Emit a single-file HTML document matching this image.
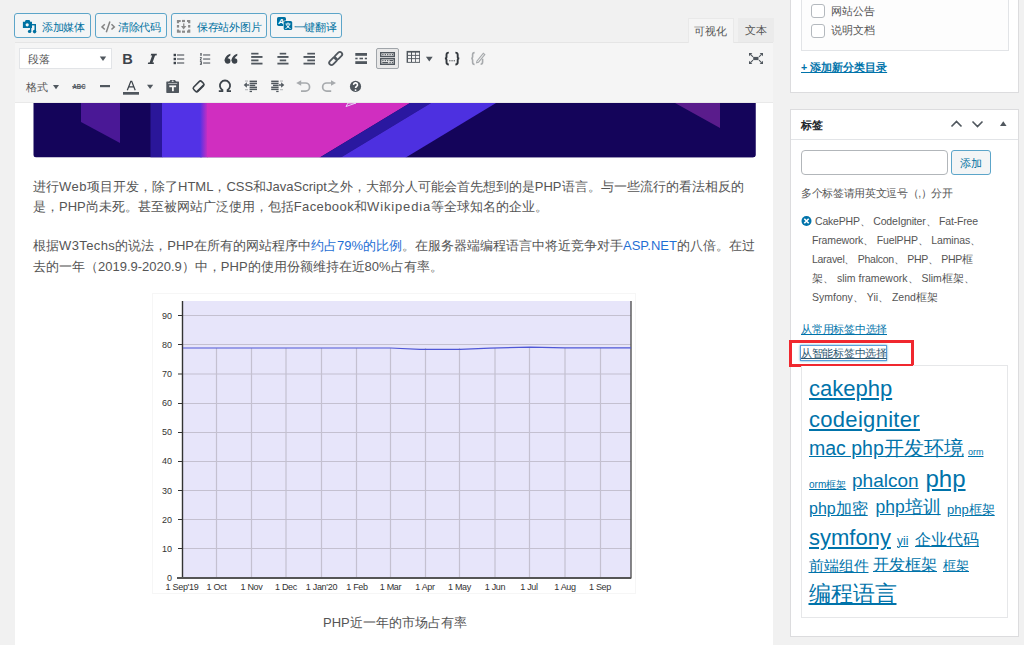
<!DOCTYPE html>
<html><head><meta charset="utf-8">
<style>
*{box-sizing:border-box;margin:0;padding:0}
html,body{width:1024px;height:645px;overflow:hidden;background:#f1f1f1;font-family:"Liberation Sans",sans-serif;color:#555}
.a{position:absolute;white-space:nowrap}
.btn{position:absolute;top:13px;height:25px;border:1px solid #5ca5c9;border-radius:3px;background:#f3f5f6;color:#0071a1;font-size:11px;letter-spacing:-.3px;line-height:26px;white-space:nowrap}
.btn span{position:absolute;top:0}
.tab{position:absolute;top:18px;height:24px;font-size:10.8px;line-height:25px;color:#555;text-align:center}
#tb{position:absolute;left:15px;top:42px;width:758px;height:61px;background:#f5f5f5;border-top:1px solid #e5e5e5;border-bottom:1px solid #e9e9e9}
#content{position:absolute;left:15px;top:103px;width:758px;height:542px;background:#fff}
svg.ov{position:absolute;left:0;top:0}
.pb{position:absolute;background:#fff;border:1px solid #ccd0d4}
.para{position:absolute;left:33px;font-size:13px;line-height:20.5px;color:#555;white-space:nowrap}
.para a{color:#1f6fd4;text-decoration:none}
.side{font-size:12px;color:#555}
.tc a{color:#0073aa;text-decoration:underline;white-space:nowrap}
</style></head><body>

<!-- media buttons -->
<div class="btn" style="left:14px;width:77px"><span style="left:27px">添加媒体</span></div>
<div class="btn" style="left:95px;width:72px"><span style="left:22px">清除代码</span></div>
<div class="btn" style="left:171px;width:96px"><span style="left:25px">保存站外图片</span></div>
<div class="btn" style="left:270px;width:72px"><span style="left:22.5px">一键翻译</span></div>

<!-- tabs -->

<!-- toolbar -->
<div id="tb"></div>
<div class="tab" style="left:687.5px;width:46px;height:25px;background:#f5f5f5;border:1px solid #e9e9e9;border-bottom:none;line-height:24px">可视化</div>
<div class="tab" style="left:738px;width:35.5px;background:#ebebeb">文本</div>
<div class="a" style="left:19px;top:48px;width:93px;height:21px;background:#fff;border:1px solid #e2e4e7"></div>
<div class="a" style="left:28px;top:49.5px;font-size:11px;line-height:19px;color:#555">段落</div>
<div class="a" style="left:25.5px;top:77.5px;font-size:11px;line-height:19px;color:#555">格式</div>
<div class="a" style="left:376px;top:48px;width:23px;height:21px;border:1px solid #a0a5aa;border-radius:2px;background:#e8e8e8"></div>

<!-- content -->
<div id="content"></div>

<!-- all icons overlay -->
<svg class="ov" width="1024" height="645" viewBox="0 0 1024 645">
 <!-- media button icons -->
 <g fill="#0071a1">
  <path d="M22.9 21.8h2l.8-1.7h3.8l.8 1.7h1.7v6.3h-9.1z"/>
  <rect x="34.5" y="24" width="1.5" height="8"/><rect x="32" y="24" width="4" height="1.4"/><rect x="30" y="28" width="1.3" height="3.5"/>
  <circle cx="29.6" cy="31.4" r="1.7"/><circle cx="34.6" cy="31.6" r="1.8"/>
 </g>
 <circle cx="27.2" cy="24.8" r="1.6" fill="#f3f5f6"/>
 <g fill="none" stroke="#838383" stroke-width="1.5">
  <path d="M104.8 24.3l-2.8 2.6 2.8 2.6M111.5 24.3l2.8 2.6-2.8 2.6M109.9 21.5l-3.6 10.8"/>
 </g>
 <g fill="none" stroke="#8a8a8a" stroke-width="2.2">
  <path d="M178 23.2v-2.2h2.7M187 21h2.2v2.2M178 29.5v2.2h2.7M187 31.7h2.2v-2.2"/>
 </g>
 <g fill="#8a8a8a">
  <rect x="182" y="19.9" width="3" height="2.2"/><rect x="182" y="30.6" width="3" height="2.2"/>
  <rect x="176.9" y="25" width="2.2" height="2.6"/><rect x="188.1" y="25" width="2.2" height="2.6"/>
  <rect x="183.1" y="23.4" width="1.3" height="3.5"/><path d="M181 26.1h5.3l-2.65 3.3z"/>
 </g>
 <rect x="277" y="17" width="9" height="8.9" rx="1.6" fill="#0071a1"/>
 <text x="278.3" y="24.3" font-size="8" font-weight="bold" font-style="italic" fill="#fff" font-family="Liberation Sans">A</text>
 <rect x="283.2" y="20.5" width="9.5" height="10" rx="1.6" fill="#f3f5f6"/>
 <rect x="283.7" y="21" width="8.5" height="9" rx="1.6" fill="#0071a1"/>
 <path d="M288 22.5v1.2M285.5 24h5M286.5 24.5c.5 2 2.5 3.5 4 4M289.5 24.5c-.5 2-2.5 3.5-4 4" fill="none" stroke="#fff" stroke-width="1"/>

 <!-- select arrow -->
 <path d="M99.8 56.6h6.4l-3.2 4.5z" fill="#50575e"/>
 <!-- row1 -->
 <text x="122.2" y="64.2" font-size="14.6" font-weight="bold" fill="#3c434a" font-family="Liberation Sans">B</text>
 <path fill="#3c434a" d="M151.2 53.8h5.7l-.35 1.7h-1.5l-2.5 6.9h1.5l-.35 1.7h-5.9l.35-1.7h1.5l2.5-6.9h-1.5z"/>
 <g fill="#3c434a">
  <rect x="173.6" y="53.8" width="2.4" height="2.4"/><rect x="173.6" y="57.8" width="2.4" height="2.4"/><rect x="173.6" y="61.8" width="2.4" height="2.4"/>
 </g>
 <g fill="#8c8f94">
  <rect x="177" y="54.1" width="7.2" height="1.8"/><rect x="177" y="58.1" width="7.2" height="1.8"/><rect x="177" y="62.1" width="7.2" height="1.8"/>
  <rect x="203.1" y="54.1" width="7.1" height="1.7"/><rect x="203.1" y="58.2" width="7.1" height="1.7"/><rect x="203.1" y="62.2" width="7.1" height="1.7"/>
 </g>
 <g fill="#3c434a">
  <rect x="200.4" y="53" width="1.2" height="2.8"/>
  <path d="M199.9 57.2h1.9v.9l-1 1.6h1v.8h-1.9v-.8l1-1.6h-1z"/>
  <path d="M199.9 61.3h1.9v3.5h-1.9v-.8h1v-.6h-.8v-.7h.8v-.6h-1z"/>
 </g>
 <g fill="#3c434a">
  <circle cx="227.7" cy="61" r="2.75"/>
  <path d="M230.4 53.8c-3.3 1-5.9 3.9-5.9 7.4h2.5c0-2.4 1.6-4.5 3.4-5.6z"/>
  <circle cx="234.6" cy="61" r="2.75"/>
  <path d="M237.3 53.8c-3.3 1-5.9 3.9-5.9 7.4h2.5c0-2.4 1.6-4.5 3.4-5.6z"/>
 </g>
 <g fill="#50575e">
  <rect x="251.2" y="52.8" width="7.3" height="1.7"/><rect x="251.2" y="56" width="11.3" height="1.9"/><rect x="251.2" y="59.5" width="7.3" height="1.8"/><rect x="251.2" y="62.7" width="11.3" height="1.8"/>
  <rect x="279.7" y="52.8" width="6.5" height="1.7"/><rect x="277.4" y="56" width="11.1" height="1.9"/><rect x="279.7" y="59.5" width="6.5" height="1.8"/><rect x="277.4" y="62.7" width="11.1" height="1.8"/>
  <rect x="307.3" y="52.8" width="7.7" height="1.7"/><rect x="303.5" y="56" width="11.5" height="1.9"/><rect x="307.3" y="59.5" width="7.7" height="1.8"/><rect x="303.5" y="62.7" width="11.5" height="1.8"/>
  <rect x="355.3" y="53" width="11.7" height="2.8"/><rect x="355.3" y="57.7" width="2.3" height="1.6"/><rect x="359.5" y="57.7" width="3.5" height="1.6"/><rect x="364.8" y="57.7" width="2.2" height="1.6"/><rect x="355.3" y="61.2" width="11.7" height="2.8"/>
 </g>
 <!-- link -->
 <g fill="none" stroke="#50575e" stroke-width="1.8">
  <rect x="-2.3" y="-4.4" width="4.6" height="8.8" rx="2.3" transform="translate(333 61.2) rotate(45)"/>
  <rect x="-2.3" y="-4.4" width="4.6" height="8.8" rx="2.3" transform="translate(338.4 55.8) rotate(45)"/>
 </g>
 <!-- kitchen sink toggle icon -->
 <g fill="none" stroke="#50575e" stroke-width="1.4">
  <rect x="380.7" y="52.7" width="13.6" height="3.8"/>
  <rect x="380.7" y="58.7" width="13.6" height="5.6"/>
 </g>
 <g fill="#50575e"><rect x="382.3" y="54" width="1.2" height="1.2"/><rect x="384.7" y="54" width="1.2" height="1.2"/><rect x="387.1" y="54" width="1.2" height="1.2"/><rect x="389.5" y="54" width="1.2" height="1.2"/><rect x="391.9" y="54" width="1.2" height="1.2"/>
 <rect x="382.3" y="60" width="1.2" height="1.2"/><rect x="384.7" y="60" width="1.2" height="1.2"/><rect x="387.1" y="60" width="1.2" height="1.2"/><rect x="389.5" y="60" width="3.6" height="1.2"/>
 <rect x="382.3" y="62" width="5.8" height="1.2"/><rect x="389.5" y="62" width="1.2" height="1.2"/><rect x="391.9" y="62" width="1.2" height="1.2"/></g>
 <!-- table -->
 <rect x="406.6" y="50.9" width="13.4" height="11.9" fill="#50575e"/>
 <g fill="#f5f5f5">
  <rect x="408" y="52.6" width="3" height="2.3"/><rect x="412" y="52.6" width="3.2" height="2.3"/><rect x="416" y="52.6" width="3.2" height="2.3"/>
  <rect x="408" y="55.8" width="3" height="2.4"/><rect x="412" y="55.8" width="3.2" height="2.4"/><rect x="416" y="55.8" width="3.2" height="2.4"/>
  <rect x="408" y="59.1" width="3" height="2.8"/><rect x="412" y="59.1" width="3.2" height="2.8"/><rect x="416" y="59.1" width="3.2" height="2.8"/>
 </g>
 <path d="M425.9 56.7h6.8l-3.4 4.8z" fill="#50575e"/>
 <path d="M448.8 52.6c-1.9 0-2.3 1-2.3 2.2v2.1c0 1-.6 1.5-1.6 1.5c1 0 1.6.5 1.6 1.5v2.4c0 1.2.4 2.2 2.3 2.2M455.4 52.6c1.9 0 2.3 1 2.3 2.2v2.1c0 1 .6 1.5 1.6 1.5c-1 0-1.6.5-1.6 1.5v2.4c0 1.2-.4 2.2-2.3 2.2" fill="none" stroke="#32373c" stroke-width="1.9"/>
 <rect x="449.3" y="60.2" width="1.1" height="1.1" fill="#32373c"/><rect x="451.5" y="60.2" width="1.1" height="1.1" fill="#32373c"/><rect x="453.7" y="60.2" width="1.1" height="1.1" fill="#32373c"/>
 <path d="M474.6 52.6c-1.6 0-2 1-2 2.2v2.1c0 1-.5 1.5-1.4 1.5c.9 0 1.4.5 1.4 1.5v2.4c0 1.2.4 2.2 2 2.2M482.6 58.8v3.2c0 1.2-.4 2.2-2 2.2" fill="none" stroke="#a7aaad" stroke-width="1.6"/>
 <path d="M477 61l6.3-7.7 1.5 1.2-6.3 7.7-1.9.6z" fill="none" stroke="#a7aaad" stroke-width="1.1"/>
 <!-- fullscreen -->
 <g fill="#50575e">
  <rect x="753.2" y="56.9" width="5.3" height="3.2"/>
  <path d="M749 52.9h3.4l-3.4 3.4z"/><path d="M763 52.9h-3.4l3.4 3.4z"/>
  <path d="M749 64.1h3.4l-3.4-3.4z"/><path d="M763 64.1h-3.4l3.4-3.4z"/>
 </g>
 <path d="M750.5 54.4l2.5 2.5M761.5 54.4l-2.5 2.5M750.5 62.6l2.5-2.5M761.5 62.6l-2.5-2.5" stroke="#50575e" stroke-width="1.1"/>

 <!-- row2 -->
 <g fill="#50575e">
  <path d="M53 85h6l-3 4.3z"/>
  <text x="72.5" y="89.3" font-size="7" font-weight="bold" fill="#50575e" font-family="Liberation Sans" textLength="13" lengthAdjust="spacingAndGlyphs">ABC</text>
  <rect x="72" y="86.3" width="13.5" height="0.9"/>
  <rect x="100" y="85" width="10" height="2.2"/>
  <path d="M127.3 90.3l3.5-9h.9l3.5 9M128.8 86.9h5" fill="none" stroke="#3c434a" stroke-width="1.25"/>
  <rect x="123" y="92" width="16" height="2.7"/>
  <path d="M147 84.8h6.2l-3.1 4.1z"/>
  <!-- paste -->
  <rect x="166.3" y="81.4" width="12.7" height="11.5" rx=".6"/>
  <path d="M168.8 82.2l1.6-2.3h4.6l1.6 2.3z"/>
  <ellipse cx="172.7" cy="81.2" rx="1" ry=".6" fill="#f5f5f5"/>
  <rect x="168.2" y="83.2" width="9" height=".8" fill="#c5c7ca"/>
  <rect x="169.3" y="85.4" width="6.8" height="1.8" fill="#f5f5f5"/><rect x="172" y="87" width="1.8" height="4.2" fill="#f5f5f5"/>
  <!-- omega -->
  <path d="M218.8 91.1h3.6v-1.1a5.1 5.1 0 1 1 5.2 0v1.1h3.4" fill="none" stroke="#3c434a" stroke-width="1.8"/>
  <!-- outdent -->
  <rect x="249.6" y="80.6" width="7.4" height="1.5"/><rect x="249.6" y="82.7" width="7.4" height="1.5"/><rect x="249.6" y="84.7" width="5.6" height="1.4"/><rect x="249.6" y="86.6" width="7.4" height="1.5"/><rect x="249.6" y="88.6" width="7.4" height="1.5"/><rect x="249.6" y="90.8" width="2.4" height="1.3"/>
  <path d="M243.7 85l3.2-2.7v5.4z"/><rect x="246.5" y="84.3" width="2.6" height="1.4"/>
  <rect x="245" y="80.6" width="3" height="0.9" fill="#a7aaad"/><rect x="245" y="89.3" width="3" height="0.9" fill="#a7aaad"/>
  <!-- indent -->
  <rect x="271.2" y="80.6" width="7.4" height="1.5"/><rect x="271.2" y="82.7" width="7.4" height="1.5"/><rect x="273" y="84.7" width="5.6" height="1.4"/><rect x="271.2" y="86.6" width="7.4" height="1.5"/><rect x="271.2" y="88.6" width="7.4" height="1.5"/><rect x="276.2" y="90.8" width="2.4" height="1.3"/>
  <path d="M284.3 85l-3.2-2.7v5.4z"/><rect x="278.9" y="84.3" width="2.6" height="1.4"/>
  <rect x="280" y="80.6" width="3" height="0.9" fill="#a7aaad"/><rect x="280" y="89.3" width="3" height="0.9" fill="#a7aaad"/>
  <!-- help -->
  <circle cx="355.5" cy="86.4" r="5.6"/>
 </g>
 <path d="M353.6 84.9a1.95 1.95 0 1 1 2.9 1.6c-.7.4-.95.8-.95 1.6" fill="none" stroke="#fff" stroke-width="1.6"/><circle cx="355.55" cy="90.1" r=".95" fill="#fff"/>
 <!-- eraser -->
 <g transform="translate(198.6 86.4) rotate(-45)">
  <rect x="-5.6" y="-3" width="11.2" height="6" rx="1.8" fill="none" stroke="#3c434a" stroke-width="1.6"/>
  <rect x="-4.8" y="1.7" width="9.6" height="1.6" fill="#3c434a"/>
 </g>
 <!-- undo redo -->
 <g fill="none" stroke="#a7aaad" stroke-width="1.7">
  <path d="M300.5 83h5a4 4 0 0 1 0 8.1h-4.5"/>
  <path d="M331.7 83h-5a4 4 0 0 0 0 8.1h4.5"/>
 </g>
 <path d="M296.2 83l5-2.8v5.6z" fill="#a7aaad"/>
 <path d="M336 83l-5-2.8v5.6z" fill="#a7aaad"/>
</svg>

<div class="para" style="top:177px">进行<span style="letter-spacing:.5px">Web</span>项目开发，除了HTML，CSS和JavaScript之外，大部分人可能会首先想到的是PHP语言。与一些流行的看法相反的</div>
<div class="para" style="top:197px">是，PHP尚未死。甚至被网站广泛使用，包括<span style="letter-spacing:.4px">Facebook</span>和<span style="letter-spacing:.85px">Wikipedia</span>等全球知名的企业。</div>
<div class="para" style="top:236px">根据<span style="letter-spacing:.4px">W3Techs</span>的说法，PHP在所有的网站程序中<a>约占79%的比例</a>。在服务器端编程语言中将近竞争对手<a>ASP.NET</a>的八倍。在过</div>
<div class="para" style="top:257px">去的一年（2019.9-2020.9）中，PHP的使用份额维持在近80%占有率。</div>


<!-- banner -->
<svg class="ov" style="left:33px;top:103px" width="723" height="55" viewBox="33 103 723 55">
 <defs>
  <linearGradient id="g1" x1="0" x2="1"><stop offset="0" stop-color="#5232e6"/><stop offset="1" stop-color="#d02ec0"/></linearGradient>
  <clipPath id="cp"><path d="M33.5 103h722v51.8a2.5 2.5 0 0 1-2.5 2.5h-717a2.5 2.5 0 0 1-2.5-2.5z"/></clipPath>
 </defs>
 <g clip-path="url(#cp)">
  <rect x="33" y="103" width="723" height="55" fill="#14045a"/>
  <path d="M81 103h39v40l-39-21z" fill="#4a1896"/>
  <rect x="150.5" y="103" width="12" height="55" fill="#2a1699"/>
  <rect x="162" y="103" width="40" height="55" fill="#5232e6"/>
  <rect x="200" y="103" width="8" height="55" fill="url(#g1)"/>
  <path d="M207 103h203l-91 55h-112z" fill="#d02ec0"/>
  <path d="M410 103h21l-91 55h-21z" fill="#2a18a0"/>
  <path d="M431 103h100l-126 55h-65z" fill="#4d30e0"/>
  <path d="M496 103h260v55h-351z" fill="#14045a"/>
  <path d="M675 103h45v25z" fill="#5a1c8c"/>
  <path d="M346 106.5l10-3.5h-8z" fill="none" stroke="#e8d8f8" stroke-width="1"/>
 </g>
</svg>
<!-- chart -->
<svg class="ov" style="left:150px;top:290px" width="490" height="310" viewBox="150 290 490 310">
 <rect x="152.5" y="293.5" width="483" height="300" fill="#fff" stroke="#f6f6f6"/>
 <rect x="182" y="301" width="449" height="277" fill="#e7e5fa"/>
 <g stroke="#c4c0d0" stroke-width="1.2">
  <path d="M182 315.5h449M182 344.5h449M182 374h449M182 403.5h449M182 432.5h449M182 461.5h449M182 490.5h449M182 519.5h449M182 548.5h449"/>
  <path d="M216.5 348v230M251.5 348v230M286 348v230M321.5 348v230M356.5 348v230M390.5 348v230M425.5 348v230M459.5 348v230M495 348v230M529.5 348v230M565 348v230M600.5 348v230"/>
 </g>
 <path d="M182.5 301v277.5" stroke="#333" stroke-width="1.4"/>
 <path d="M631 301v277.5" stroke="#555" stroke-width="1.4"/>
 <path d="M177 578h454" stroke="#555" stroke-width="2"/>
 <g stroke="#333" stroke-width="1.2"><path d="M178 315.5h4M178 344.5h4M178 374h4M178 403.5h4M178 432.5h4M178 461.5h4M178 490.5h4M178 519.5h4M178 548.5h4"/></g>
 <path d="M183 348h207.5L420 349.3h40l30-1.2 40-1 35 .8h66" fill="none" stroke="#4f57d6" stroke-width="1.2"/>
 <g font-family="Liberation Sans" font-size="9" fill="#333" text-anchor="end">
  <text x="172" y="318.7">90</text><text x="172" y="348">80</text><text x="172" y="377">70</text><text x="172" y="406">60</text><text x="172" y="435.2">50</text><text x="172" y="464.3">40</text><text x="172" y="493.5">30</text><text x="172" y="522.6">20</text><text x="172" y="551.8">10</text><text x="172" y="581">0</text>
 </g>
 <g font-family="Liberation Sans" font-size="9" fill="#333" text-anchor="middle" letter-spacing="-0.3">
  <text x="182" y="590">1 Sep'19</text><text x="216.5" y="590">1 Oct</text><text x="251.5" y="590">1 Nov</text><text x="286" y="590">1 Dec</text><text x="321.5" y="590">1 Jan'20</text><text x="357" y="590">1 Feb</text><text x="390.5" y="590">1 Mar</text><text x="425" y="590">1 Apr</text><text x="459.5" y="590">1 May</text><text x="495" y="590">1 Jun</text><text x="529" y="590">1 Jul</text><text x="565" y="590">1 Aug</text><text x="600" y="590">1 Sep</text>
 </g>
</svg>
<div class="a" style="left:323px;top:614px;font-size:13px;line-height:18px;color:#555">PHP近一年的市场占有率</div>
<!-- sidebar -->
<div class="pb" style="left:790px;top:-5px;width:229px;height:98px;border-color:#dcdcde"></div>
<div class="a" style="left:801px;top:-5px;width:208px;height:56px;background:#fdfdfd;border:1px solid #e2e4e7"></div>
<div class="a" style="left:811px;top:4px;width:14px;height:14px;border:1px solid #b4b9be;border-radius:3px;background:#fff"></div>
<div class="a" style="left:811px;top:23.5px;width:14px;height:14px;border:1px solid #b4b9be;border-radius:3px;background:#fff"></div>
<div class="a side" style="left:830.5px;top:3px;line-height:17px;font-size:10.6px">网站公告</div>
<div class="a side" style="left:830.5px;top:22px;line-height:17px;font-size:10.6px">说明文档</div>
<div class="a" style="left:801px;top:59px;font-size:10.6px;line-height:17px;color:#0073aa;font-weight:bold;text-decoration:underline">+ 添加新分类目录</div>

<div class="pb" style="left:790px;top:108.5px;width:229px;height:528px;border-color:#dcdcde"></div>
<div class="a" style="left:791px;top:139px;width:227px;height:1px;background:#e2e4e7"></div>
<div class="a" style="left:801px;top:116px;font-size:11.2px;font-weight:bold;line-height:18px;color:#23282d">标签</div>
<svg class="ov" width="1024" height="645" viewBox="0 0 1024 645">
 <path d="M951.5 126.5l5-5 5 5M972.5 121.5l5 5 5-5" fill="none" stroke="#50575e" stroke-width="1.6"/>
 <path d="M1000 126h6.6l-3.3-4.7z" fill="#50575e"/>
 <circle cx="806.5" cy="221" r="5" fill="#0073aa"/>
 <path d="M804.3 218.8l4.4 4.4M808.7 218.8l-4.4 4.4" stroke="#fff" stroke-width="1.6"/>
</svg>
<div class="a" style="left:801px;top:150px;width:147px;height:25px;border:1px solid #b2b6ba;border-radius:4px;background:#fff"></div>
<div class="a" style="left:951px;top:150px;width:40px;height:25px;border:1px solid #5ca5c9;border-radius:3px;background:#f3f5f6;color:#0071a1;font-size:11px;line-height:24px;text-align:center">添加</div>
<div class="a side" style="left:801px;top:185px;font-size:10.5px;line-height:17px;letter-spacing:-.35px">多个标签请用英文逗号（,）分开</div>
<div class="a side tg" style="left:815px;top:212px;font-size:10.5px;line-height:19px;letter-spacing:-.19px">CakePHP、 CodeIgniter、 Fat-Free</div>
<div class="a side tg" style="left:812px;top:231px;font-size:10.5px;line-height:19px;letter-spacing:-.15px">Framework、 FuelPHP、 Laminas、</div>
<div class="a side tg" style="left:812px;top:250px;font-size:10.5px;line-height:19px;letter-spacing:-.28px">Laravel、 Phalcon、 PHP、 PHP框</div>
<div class="a side tg" style="left:812px;top:269px;font-size:10.5px;line-height:19px">架、 slim framework、 Slim框架、</div>
<div class="a side tg" style="left:812px;top:288px;font-size:10.5px;line-height:19px">Symfony、 Yii、 Zend框架</div>
<div class="a" style="left:801px;top:321px;font-size:10.5px;letter-spacing:-.25px;line-height:17px;color:#0073aa;text-decoration:underline">从常用标签中选择</div>
<div class="a" style="left:800px;top:345px;width:87px;height:16px;border:1px solid #5b9dd9;box-shadow:0 0 2px rgba(30,140,190,.8)"></div>
<div class="a" style="left:801px;top:345px;font-size:10.5px;letter-spacing:-.3px;line-height:17px;color:#2c5670;text-decoration:underline">从智能标签中选择</div>
<div class="a" style="left:789px;top:339.8px;width:124.5px;height:27.6px;border:3.2px solid #f0282f"></div>
<div class="a" style="left:801px;top:365.5px;width:207px;height:252px;border:1px solid #e6e7e9;border-top:none;background:#fff"></div>
<div class="a" style="left:913px;top:365px;width:95px;height:1px;background:#e6e7e9"></div>
<div class="tc">
 <a class="a" style="left:809px;top:375.5px;font-size:22px;line-height:26px">cakephp</a>
 <a class="a" style="left:809px;top:406.5px;font-size:22px;line-height:26px;letter-spacing:.3px">codeigniter</a>
 <a class="a" style="left:809px;top:436px;font-size:19.5px;line-height:24px">mac php开发环境</a>
 <a class="a" style="left:968px;top:446px;font-size:9px;line-height:12px">orm</a>
 <a class="a" style="left:809px;top:478.5px;font-size:10px;line-height:12px">orm框架</a>
 <a class="a" style="left:852px;top:469.5px;font-size:19px;line-height:22px">phalcon</a>
 <a class="a" style="left:925.5px;top:464.7px;font-size:24px;line-height:28px">php</a>
 <a class="a" style="left:809px;top:498.7px;font-size:16px;line-height:20px">php加密</a>
 <a class="a" style="left:875.5px;top:497px;font-size:17.5px;line-height:20px">php培训</a>
 <a class="a" style="left:947px;top:501.8px;font-size:13px;line-height:16px">php框架</a>
 <a class="a" style="left:809px;top:525px;font-size:22px;line-height:26px">symfony</a>
 <a class="a" style="left:897px;top:533.6px;font-size:12px;line-height:14px">yii</a>
 <a class="a" style="left:915px;top:530px;font-size:16px;line-height:20px">企业代码</a>
 <a class="a" style="left:808.5px;top:557px;font-size:14.6px;line-height:18px">前端组件</a>
 <a class="a" style="left:873px;top:555px;font-size:16px;line-height:20px">开发框架</a>
 <a class="a" style="left:943px;top:558px;font-size:13px;line-height:16px">框架</a>
 <a class="a" style="left:808.5px;top:580px;font-size:22px;line-height:28px">编程语言</a>
</div>

</body></html>
